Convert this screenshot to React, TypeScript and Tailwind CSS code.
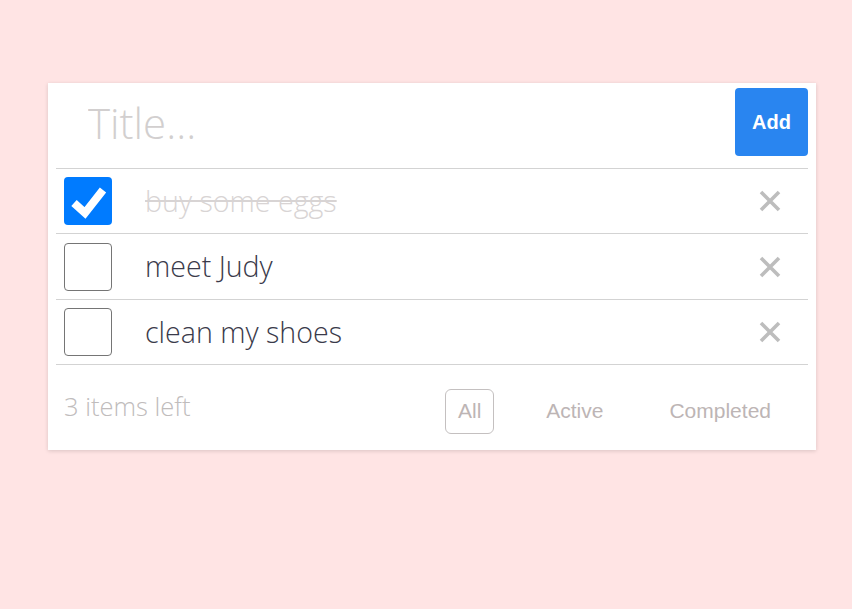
import { useState } from "react";

const todos = [
  { id: 1, title: "buy some eggs", done: true },
  { id: 2, title: "meet Judy", done: false },
  { id: 3, title: "clean my shoes", done: false },
];

const CloseIcon = () => (
  <svg width="24" height="24" viewBox="0 0 24 24" className="text-[#bdbdbd]">
    <path d="M3 3 L21 21 M21 3 L3 21" stroke="currentColor" strokeWidth="3.6" fill="none" />
  </svg>
);

const App = () => {
  const [filter] = useState("All");

  return (
    <div className="min-h-[609px] bg-[#ffe4e4] pt-[83px] font-['Open_Sans',sans-serif]">
      <div className="ml-[48px] w-[768px] bg-white px-2 shadow-[0_1px_4px_rgba(0,0,0,0.15)]">
        <div className="flex h-[86px] items-start border-b border-[#d3d3d3] pt-[5px]">
          <input
            type="text"
            placeholder="Title..."
            className="h-[68px] flex-1 pl-[32px] text-[42px] font-light text-[#333] outline-none placeholder:text-[#d2cfcf]"
          />
          <button className="h-[68px] w-[73px] rounded-[4px] bg-[#2985f0] font-['Liberation_Sans',sans-serif] text-[20px] font-bold text-white">
            Add
          </button>
        </div>

        {todos.map((todo) => (
          <div
            key={todo.id}
            className="flex h-[65.4px] items-center border-b border-[#d3d3d3] pl-2 pr-[26px]"
          >
            {todo.done ? (
              <div className="flex h-[48px] w-[48px] items-center justify-center rounded-[4px] bg-[#007bff]">
                <svg width="48" height="48" viewBox="0 0 48 48">
                  <path d="M10 26 L21 36 L39 13" stroke="#fff" strokeWidth="8" fill="none" strokeLinecap="butt" strokeLinejoin="miter" />
                </svg>
              </div>
            ) : (
              <div className="h-[48px] w-[48px] rounded-[4px] border border-[#757575] bg-white" />
            )}
            <span
              className={
                todo.done
                  ? "ml-[33px] flex-1 text-[28.6px] font-light text-[#d8d4d4] line-through"
                  : "ml-[33px] flex-1 text-[28.6px] font-light text-[#3a3a4a]"
              }
            >
              {todo.title}
            </span>
            <CloseIcon />
          </div>
        ))}

        <div className="flex h-[85px] items-center pl-2">
          <span className="mb-[3px] flex-1 text-[25.5px] font-light text-[#c0bcbc]">3 items left</span>
          <div className="mr-[37px] mt-[7px] flex items-center font-['Liberation_Sans',sans-serif] text-[21px] text-[#bdb5b5]">
            <button
              className={
                filter === "All"
                  ? "h-[45px] w-[49px] rounded-[6px] border border-[#c4c0c0]"
                  : "h-[45px] w-[49px]"
              }
            >
              All
            </button>
            <button className="ml-[52px]">Active</button>
            <button className="ml-[66px]">Completed</button>
          </div>
        </div>
      </div>
    </div>
  );
};

export default App;
